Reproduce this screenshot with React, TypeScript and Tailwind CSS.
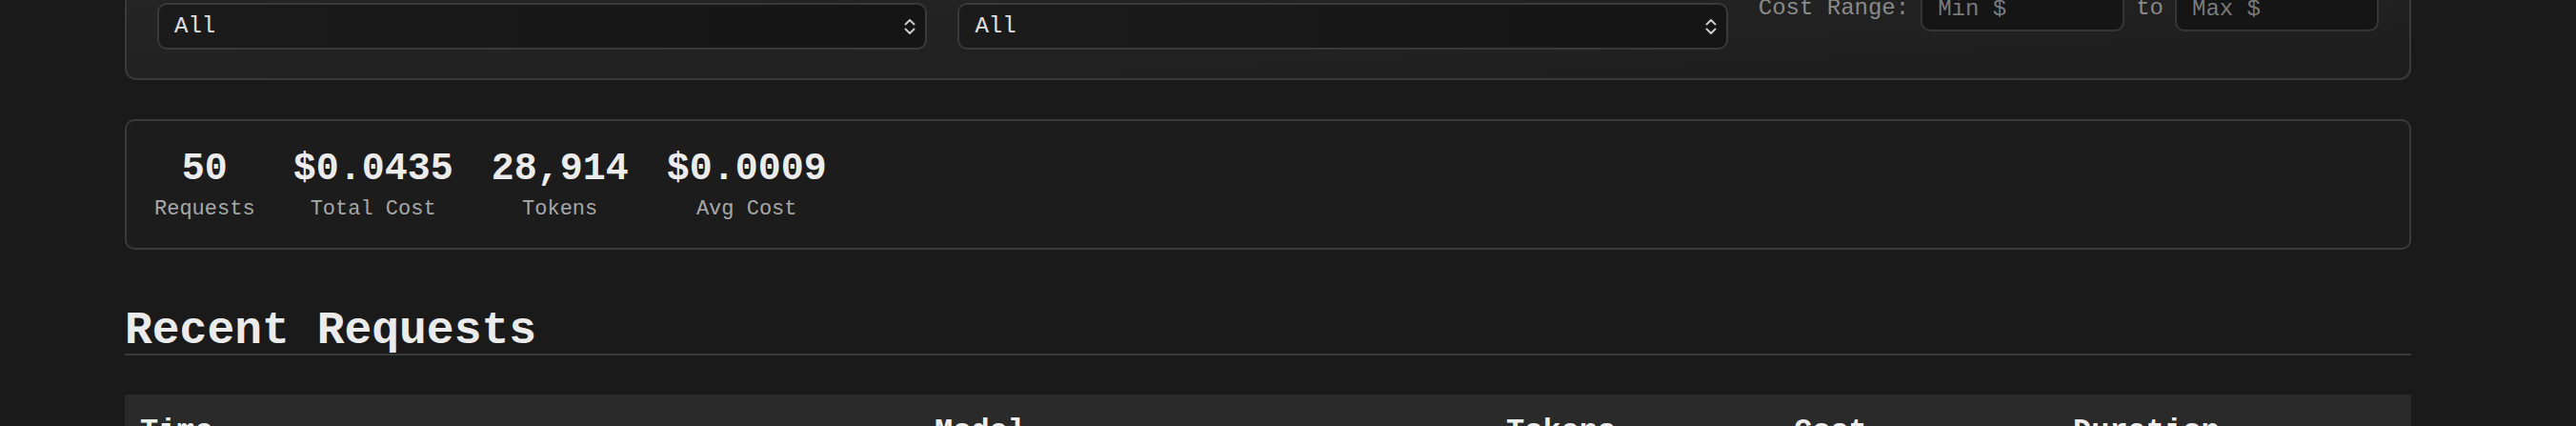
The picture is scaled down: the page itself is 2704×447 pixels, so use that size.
import React from 'react'

// ─── Small pieces ─────────────────────────────────────────────────────────────

function UpDown() {
  return (
    <svg width="12" height="18" viewBox="0 0 12 18" fill="none" stroke="#c8c8c8" strokeWidth="2" strokeLinecap="round" strokeLinejoin="round">
      <path d="M1.5 6.5 6 2l4.5 4.5" />
      <path d="M1.5 11.5 6 16l4.5-4.5" />
    </svg>
  )
}

function FakeSelect({ value }: { value: string }) {
  return (
    <div className="flex items-center justify-between h-[49px] pl-4 pr-[10px] rounded-[10px] border-2 border-[#3a3a3a] bg-gradient-to-r from-[#1b1b1b] to-[#151515]">
      <span className="text-[24px] leading-[28px] text-[#e0e0e0]">{value}</span>
      <UpDown />
    </div>
  )
}

function RangeInput({ placeholder }: { placeholder: string }) {
  return (
    <input
      placeholder={placeholder}
      className="h-[48px] w-[214px] px-4 rounded-[10px] border-2 border-[#363636] bg-[#151515] text-[24px] leading-[28px] text-[#ddd] placeholder:text-[#7a7a7a] outline-none"
    />
  )
}

function Stat({ value, label }: { value: string; label: string }) {
  return (
    <div className="flex flex-col items-center">
      <span className="text-[40px] leading-[48px] font-bold text-[#ececec]">{value}</span>
      <span className="mt-[5px] text-[22px] leading-[26px] text-[#a8a8a8]">{label}</span>
    </div>
  )
}

function HeadCell({ label }: { label: string }) {
  return (
    <div className="px-4 pt-[15px] flex items-baseline">
      <span className="text-[32px] font-bold text-[#eeeeee]">{label}</span>
      <span className="ml-2 text-[16px] text-[#8a8a8a]">↕</span>
    </div>
  )
}

// ─── Page ─────────────────────────────────────────────────────────────────────

export default function App() {
  return (
    <div
      className="w-[2704px] h-[447px] overflow-hidden bg-[#1a1a1a]"
      style={{ fontFamily: '"Liberation Mono", "Courier New", monospace' }}
    >
      <div className="ml-[131px] w-[2400px]">
        {/* Filters */}
        <div className="-mt-[49px] px-8 pt-8 pb-[30px] rounded-[12px] border-2 border-[#3a3a3a] bg-gradient-to-br from-[#262626] to-[#1e1e1e]">
          <div className="flex items-start gap-8">
            <div className="flex-1 mt-[18px]">
              <FakeSelect value="All" />
            </div>
            <div className="flex-1 mt-[18px]">
              <FakeSelect value="All" />
            </div>
            <div className="flex items-center gap-3 h-[48px]">
              <span className="text-[24px] leading-[28px] text-[#8a8a8a]">Cost Range:</span>
              <RangeInput placeholder="Min $" />
              <span className="text-[24px] leading-[28px] text-[#8a8a8a]">to</span>
              <RangeInput placeholder="Max $" />
            </div>
          </div>
        </div>

        {/* Summary */}
        <div className="mt-[41px] pt-[27px] pb-[27px] pl-[29px] flex gap-10 rounded-[10px] border-2 border-[#3a3a3a] bg-[#1c1c1c]">
          <Stat value="50" label="Requests" />
          <Stat value="$0.0435" label="Total Cost" />
          <Stat value="28,914" label="Tokens" />
          <Stat value="$0.0009" label="Avg Cost" />
        </div>

        {/* Recent requests */}
        <h2 className="mt-[61px] text-[48px] leading-none font-bold text-[#ebebeb] border-b-2 border-[#3a3a3a]">
          Recent Requests
        </h2>

        <div className="mt-[41px] h-[80px] bg-[#2a2a2a] grid grid-cols-[834px_600px_302px_293px_1fr]">
          <HeadCell label="Time" />
          <HeadCell label="Model" />
          <HeadCell label="Tokens" />
          <HeadCell label="Cost" />
          <HeadCell label="Duration" />
        </div>
      </div>
    </div>
  )
}
